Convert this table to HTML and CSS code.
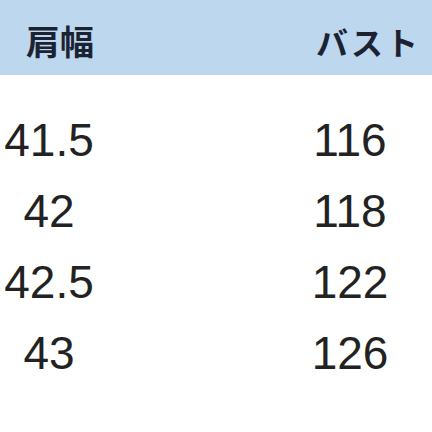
FILE: index.html
```html
<!DOCTYPE html>
<html lang="ja">
<head>
<meta charset="utf-8">
<link rel="stylesheet" href="styles.css">
</head>
<body>
<div class="table">
  <div class="head">
    <span class="h-left">肩幅</span>
    <span class="h-right">バスト</span>
  </div>
  <div class="rows">
    <div class="row"><span class="c-left">41.5</span><span class="c-right">116</span></div>
    <div class="row"><span class="c-left">42</span><span class="c-right">118</span></div>
    <div class="row"><span class="c-left">42.5</span><span class="c-right">122</span></div>
    <div class="row"><span class="c-left">43</span><span class="c-right">126</span></div>
  </div>
</div>
</body>
</html>
```
FILE: styles.css
```css
html, body {
  margin: 0;
  padding: 0;
  background: #ffffff;
}
.table {
  width: 432px;
  height: 432px;
  overflow: hidden;
}
.head {
  height: 75px;
  background: #bdd7ee;
  display: flex;
  justify-content: space-between;
  align-items: center;
  font-family: "Noto Sans CJK JP", sans-serif;
  font-weight: 700;
  color: #1b2333;
}
.h-left {
  font-size: 34px;
  padding-left: 26px;
  padding-top: 6px;
}
.h-right {
  font-size: 32px;
  letter-spacing: 3px;
  padding-right: 11px;
  padding-top: 6px;
}
.rows {
  padding-top: 30px;
  font-family: "Liberation Sans", Arial, sans-serif;
  font-size: 46px;
  color: #222;
}
.row {
  display: flex;
  height: 71px;
  line-height: 71px;
}
.c-left {
  width: 98px;
  text-align: center;
}
.c-right {
  margin-left: 202px;
  width: 100px;
  text-align: center;
}
```
